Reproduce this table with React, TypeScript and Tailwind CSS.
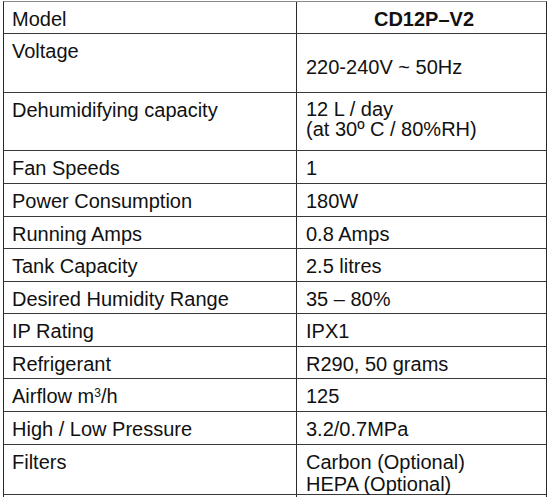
import React from 'react';

type Row = {
  label: React.ReactNode;
  value: React.ReactNode;
  h: string;
  valueClass?: string;
};

const rows: Row[] = [
  { label: 'Model', value: <span className="block text-center font-bold">CD12P–V2</span>, h: 'h-[32px]' },
  { label: 'Voltage', value: '220-240V ~ 50Hz', h: 'h-[59px]', valueClass: 'pt-[22px]' },
  {
    label: 'Dehumidifying capacity',
    value: (
      <span className="block leading-[20px]">
        12 L / day
        <br />
        (at 30º C / 80%RH)
      </span>
    ),
    h: 'h-[58px]',
    valueClass: 'pt-[6px]',
  },
  { label: 'Fan Speeds', value: '1', h: 'h-[33px]' },
  { label: 'Power Consumption', value: '180W', h: 'h-[33px]' },
  { label: 'Running Amps', value: '0.8 Amps', h: 'h-[32px]' },
  { label: 'Tank Capacity', value: '2.5 litres', h: 'h-[33px]' },
  { label: 'Desired Humidity Range', value: '35 – 80%', h: 'h-[32px]' },
  { label: 'IP Rating', value: 'IPX1', h: 'h-[33px]' },
  { label: 'Refrigerant', value: 'R290, 50 grams', h: 'h-[32px]' },
  {
    label: (
      <>
        Airflow m<sup className="text-[12px]">3</sup>/h
      </>
    ),
    value: '125',
    h: 'h-[33px]',
  },
  { label: 'High / Low Pressure', value: '3.2/0.7MPa', h: 'h-[33px]' },
  {
    label: 'Filters',
    value: (
      <span className="block leading-[22px]">
        Carbon (Optional)
        <br />
        HEPA (Optional)
      </span>
    ),
    h: 'h-[50px]',
  },
];

const App: React.FC = () => {
  return (
    <div className="w-[550px] h-[497px] bg-white overflow-hidden pt-[1px] pl-[3px]">
      <div
        className="w-[544px] border-t border-t-[#8a8a8a] border-x border-x-[#2a2a2a] text-[#111] text-[20px] leading-[22px]"
        style={{ fontFamily: '"Liberation Sans", Arial, sans-serif' }}
      >
        {rows.map((row, idx) => (
          <div key={idx} className={`flex border-b border-b-[#3a3a3a] ${row.h}`}>
            <div className="w-[293px] shrink-0 border-r border-r-[#2a2a2a] pl-[8px] pt-[6px]">{row.label}</div>
            <div className={`flex-1 pl-[9px] pr-[4px] ${row.valueClass ?? 'pt-[6px]'}`}>{row.value}</div>
          </div>
        ))}
        <div className="flex h-[10px]">
          <div className="w-[293px] shrink-0 border-r border-r-[#2a2a2a]" />
        </div>
      </div>
    </div>
  );
};

export default App;
